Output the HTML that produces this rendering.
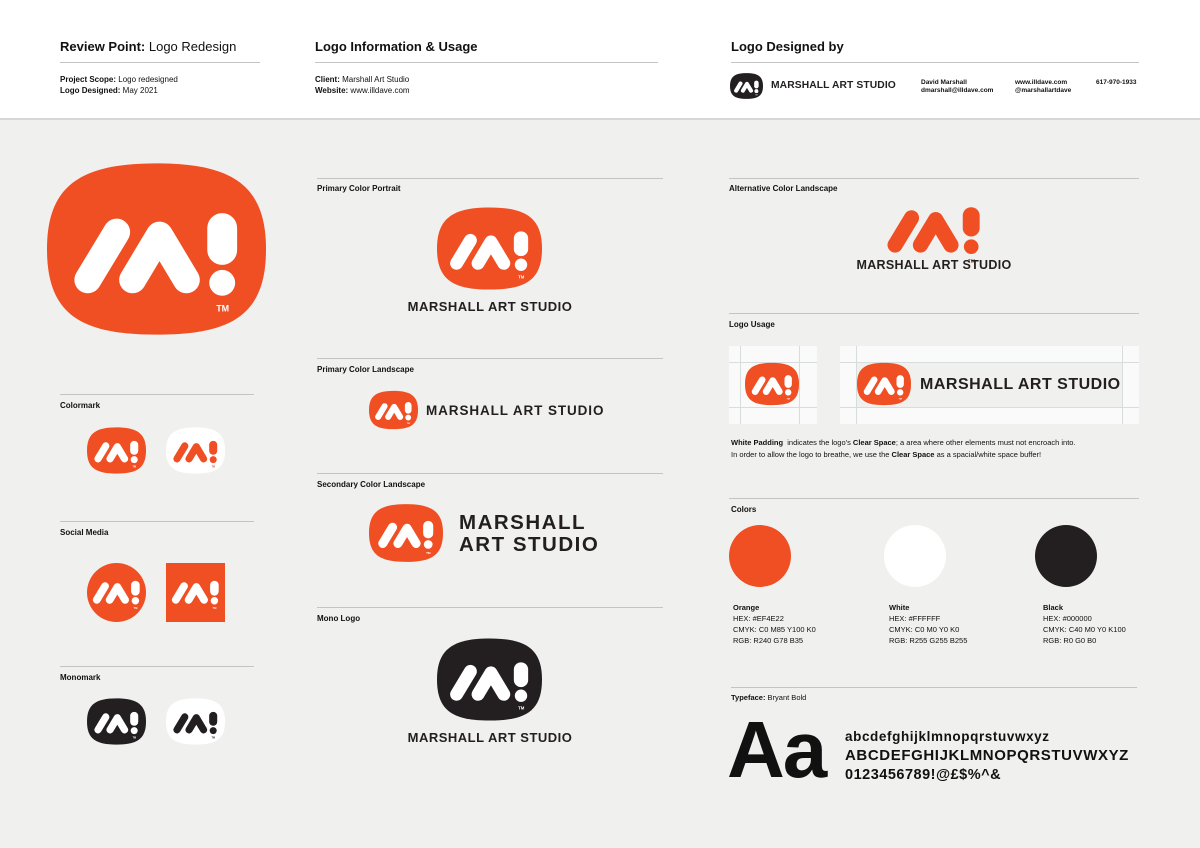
<!DOCTYPE html>
<html><head><meta charset="utf-8"><style>
*{margin:0;padding:0;box-sizing:border-box}
body{width:1200px;height:848px;background:#f0f0ee;font-family:"Liberation Sans",sans-serif;color:#111;position:relative;overflow:hidden}
.a{position:absolute;white-space:nowrap}
.hdr{position:absolute;left:0;top:0;width:1200px;height:120px;background:#fff;border-bottom:2px solid #d6d6d6}
.ln{position:absolute;height:1px;background:#c4c4c4}
.lab{position:absolute;font-size:8px;font-weight:bold;white-space:nowrap}
.sm{font-size:8px;line-height:11px}
.mas{font-weight:bold;letter-spacing:0.5px;color:#231f20}
svg.l{position:absolute}
</style></head><body>
<svg width="0" height="0" style="position:absolute">
<defs>
<symbol id="b" viewBox="0 0 220 172"><path d="M110,0 C186,0 220,22 220,86 C220,152 186,172 110,172 C34,172 0,152 0,86 C0,22 34,0 110,0Z"/></symbol>
<symbol id="m" viewBox="0 0 220 172"><g fill="none" stroke="currentColor" stroke-width="27" stroke-linecap="round" stroke-linejoin="round"><path d="M70,69 L41,117"/><path d="M86,117 L113,72 L140,117"/></g><rect x="161" y="50" width="30" height="52" rx="15" fill="currentColor"/><circle cx="176" cy="120" r="13" fill="currentColor"/><text x="170" y="149" font-size="9" font-weight="bold" font-family="Liberation Sans" fill="currentColor">TM</text></symbol>
</defs></svg>

<div class="hdr"></div>
<div class="a" style="left:60px;top:39px;font-size:13px"><b>Review Point:</b> Logo Redesign</div>
<div class="ln" style="left:60px;top:62px;width:200px"></div>
<div class="a sm" style="left:60px;top:74px"><b>Project Scope:</b> Logo redesigned<br><b>Logo Designed:</b> May 2021</div>
<div class="a" style="left:315px;top:39px;font-size:13px;font-weight:bold">Logo Information &amp; Usage</div>
<div class="ln" style="left:315px;top:62px;width:343px"></div>
<div class="a sm" style="left:315px;top:74px"><b>Client:</b> Marshall Art Studio<br><b>Website:</b> www.illdave.com</div>
<div class="a" style="left:731px;top:39px;font-size:13px;font-weight:bold">Logo Designed by</div>
<div class="ln" style="left:731px;top:62px;width:408px"></div>
<svg class="l" style="left:730px;top:72px" width="33" height="28"><use href="#b" fill="#231f20" width="33" height="28"/><use href="#m" color="#fff" width="33" height="28"/></svg>
<div class="a mas" style="left:771px;top:80px;font-size:10.3px;letter-spacing:0.1px">MARSHALL ART STUDIO</div>
<div class="a" style="left:921px;top:79px;font-size:6.5px;font-weight:bold;line-height:8px">David Marshall<br>dmarshall@illdave.com</div>
<div class="a" style="left:1015px;top:79px;font-size:6.5px;font-weight:bold;line-height:8px">www.illdave.com<br>@marshallartdave</div>
<div class="a" style="left:1096px;top:79px;font-size:6.5px;font-weight:bold">617-970-1933</div>

<!-- left column -->
<svg class="l" style="left:47px;top:163px" width="219" height="172"><use href="#b" fill="#f04e23" width="219" height="172"/><use href="#m" color="#fff" width="219" height="172"/></svg>
<div class="ln" style="left:60px;top:394px;width:194px"></div>
<div class="lab" style="left:60px;top:401px">Colormark</div>
<svg class="l" style="left:87px;top:427px" width="59" height="47"><use href="#b" fill="#f04e23" width="59" height="47"/><use href="#m" color="#fff" width="59" height="47"/></svg>
<svg class="l" style="left:166px;top:427px" width="59" height="47"><use href="#b" fill="#fff" width="59" height="47"/><use href="#m" color="#f04e23" width="59" height="47"/></svg>
<div class="ln" style="left:60px;top:521px;width:194px"></div>
<div class="lab" style="left:60px;top:528px">Social Media</div>
<div class="a" style="left:87px;top:563px;width:59px;height:59px;border-radius:50%;background:#f04e23"></div>
<svg class="l" style="left:85px;top:566px" width="63" height="50"><use href="#m" color="#fff" width="63" height="50"/></svg>
<div class="a" style="left:166px;top:563px;width:59px;height:59px;background:#f04e23"></div>
<svg class="l" style="left:164px;top:566px" width="63" height="50"><use href="#m" color="#fff" width="63" height="50"/></svg>
<div class="ln" style="left:60px;top:666px;width:194px"></div>
<div class="lab" style="left:60px;top:673px">Monomark</div>
<svg class="l" style="left:87px;top:698px" width="59" height="47"><use href="#b" fill="#231f20" width="59" height="47"/><use href="#m" color="#fff" width="59" height="47"/></svg>
<svg class="l" style="left:166px;top:698px" width="59" height="47"><use href="#b" fill="#fff" width="59" height="47"/><use href="#m" color="#231f20" width="59" height="47"/></svg>

<!-- middle column -->
<div class="ln" style="left:317px;top:178px;width:346px"></div>
<div class="lab" style="left:317px;top:184px">Primary Color Portrait</div>
<svg class="l" style="left:437px;top:205px" width="105" height="87"><use href="#b" fill="#f04e23" width="105" height="87"/><use href="#m" color="#fff" width="105" height="87"/></svg>
<div class="a mas" style="left:390px;top:299px;width:200px;text-align:center;font-size:13px">MARSHALL ART STUDIO</div>
<div class="ln" style="left:317px;top:358px;width:346px"></div>
<div class="lab" style="left:317px;top:365px">Primary Color Landscape</div>
<svg class="l" style="left:369px;top:390px" width="49" height="40"><use href="#b" fill="#f04e23" width="49" height="40"/><use href="#m" color="#fff" width="49" height="40"/></svg>
<div class="a mas" style="left:426px;top:403px;font-size:13.5px;letter-spacing:0.9px">MARSHALL ART STUDIO</div>
<div class="ln" style="left:317px;top:473px;width:346px"></div>
<div class="lab" style="left:317px;top:480px">Secondary Color Landscape</div>
<svg class="l" style="left:369px;top:503px" width="74" height="60"><use href="#b" fill="#f04e23" width="74" height="60"/><use href="#m" color="#fff" width="74" height="60"/></svg>
<div class="a mas" style="left:459px;top:512px;font-size:20.5px;line-height:22px;letter-spacing:1.5px">MARSHALL<br>ART STUDIO</div>
<div class="ln" style="left:317px;top:607px;width:346px"></div>
<div class="lab" style="left:317px;top:614px">Mono Logo</div>
<svg class="l" style="left:437px;top:636px" width="105" height="87"><use href="#b" fill="#231f20" width="105" height="87"/><use href="#m" color="#fff" width="105" height="87"/></svg>
<div class="a mas" style="left:390px;top:730px;width:200px;text-align:center;font-size:13px">MARSHALL ART STUDIO</div>

<!-- right column -->
<div class="ln" style="left:729px;top:178px;width:410px"></div>
<div class="lab" style="left:729px;top:184px">Alternative Color Landscape</div>
<svg class="l" style="left:872px;top:179px" width="124" height="97"><use href="#m" color="#f04e23" width="124" height="97"/></svg>
<div class="a mas" style="left:834px;top:258px;width:200px;text-align:center;font-size:12.5px;letter-spacing:0.3px">MARSHALL ART STUDIO</div>
<div class="ln" style="left:729px;top:313px;width:410px"></div>
<div class="lab" style="left:729px;top:320px">Logo Usage</div>
<div class="a" style="left:729px;top:346px;width:88px;height:78px;background:#fafafa"></div>
<div class="a" style="left:740px;top:346px;width:1px;height:78px;background:#d7dcdc"></div>
<div class="a" style="left:799px;top:346px;width:1px;height:78px;background:#d7dcdc"></div>
<div class="a" style="left:729px;top:362px;width:88px;height:1px;background:#d7dcdc"></div>
<div class="a" style="left:729px;top:407px;width:88px;height:1px;background:#d7dcdc"></div>
<svg class="l" style="left:745px;top:361px" width="54" height="46"><use href="#b" fill="#f04e23" width="54" height="46"/><use href="#m" color="#fff" width="54" height="46"/></svg>
<div class="a" style="left:840px;top:346px;width:299px;height:78px;background:#fafafa"></div>
<div class="a" style="left:856px;top:362px;width:266px;height:45px;background:#f0f0ee"></div>
<div class="a" style="left:856px;top:346px;width:1px;height:78px;background:#d7dcdc"></div>
<div class="a" style="left:1122px;top:346px;width:1px;height:78px;background:#d7dcdc"></div>
<div class="a" style="left:840px;top:362px;width:299px;height:1px;background:#d7dcdc"></div>
<div class="a" style="left:840px;top:407px;width:299px;height:1px;background:#d7dcdc"></div>
<svg class="l" style="left:857px;top:361px" width="54" height="46"><use href="#b" fill="#f04e23" width="54" height="46"/><use href="#m" color="#fff" width="54" height="46"/></svg>
<div class="a mas" style="left:920px;top:376px;font-size:16px;letter-spacing:0.5px">MARSHALL ART STUDIO</div>
<div class="a" style="left:731px;top:437px;font-size:7.5px;line-height:12px"><b>White Padding</b>&nbsp; indicates the logo's <b>Clear Space</b>; a area where other elements must not encroach into.<br>In order to allow the logo to breathe, we use the <b>Clear Space</b> as a spacial/white space buffer!</div>
<div class="ln" style="left:729px;top:498px;width:410px"></div>
<div class="lab" style="left:731px;top:505px">Colors</div>
<div class="a" style="left:729px;top:525px;width:62px;height:62px;border-radius:50%;background:#f04e23"></div>
<div class="a" style="left:884px;top:525px;width:62px;height:62px;border-radius:50%;background:#fff"></div>
<div class="a" style="left:1035px;top:525px;width:62px;height:62px;border-radius:50%;background:#231f20"></div>
<div class="a sm" style="left:733px;top:602px;line-height:11px;font-size:7.5px"><b>Orange</b><br>HEX: #EF4E22<br>CMYK: C0 M85 Y100 K0<br>RGB: R240 G78 B35</div>
<div class="a sm" style="left:889px;top:602px;line-height:11px;font-size:7.5px"><b>White</b><br>HEX: #FFFFFF<br>CMYK: C0 M0 Y0 K0<br>RGB: R255 G255 B255</div>
<div class="a sm" style="left:1043px;top:602px;line-height:11px;font-size:7.5px"><b>Black</b><br>HEX: #000000<br>CMYK: C40 M0 Y0 K100<br>RGB: R0 G0 B0</div>
<div class="ln" style="left:731px;top:687px;width:406px"></div>
<div class="a" style="left:731px;top:693px;font-size:7.5px"><b>Typeface:</b> Bryant Bold</div>
<div class="a" style="left:727px;top:705px;font-size:80px;font-weight:bold;letter-spacing:-2px;line-height:90px">Aa</div>
<div class="a" style="left:845px;top:727px;font-size:13.5px;font-weight:bold;line-height:19px;letter-spacing:0.6px">abcdefghijklmnopqrstuvwxyz<br><span style="font-size:15px;letter-spacing:0.6px">ABCDEFGHIJKLMNOPQRSTUVWXYZ</span><br><span style="font-size:14.5px;letter-spacing:0.5px">0123456789!@£$%^&amp;</span></div>
</body></html>
